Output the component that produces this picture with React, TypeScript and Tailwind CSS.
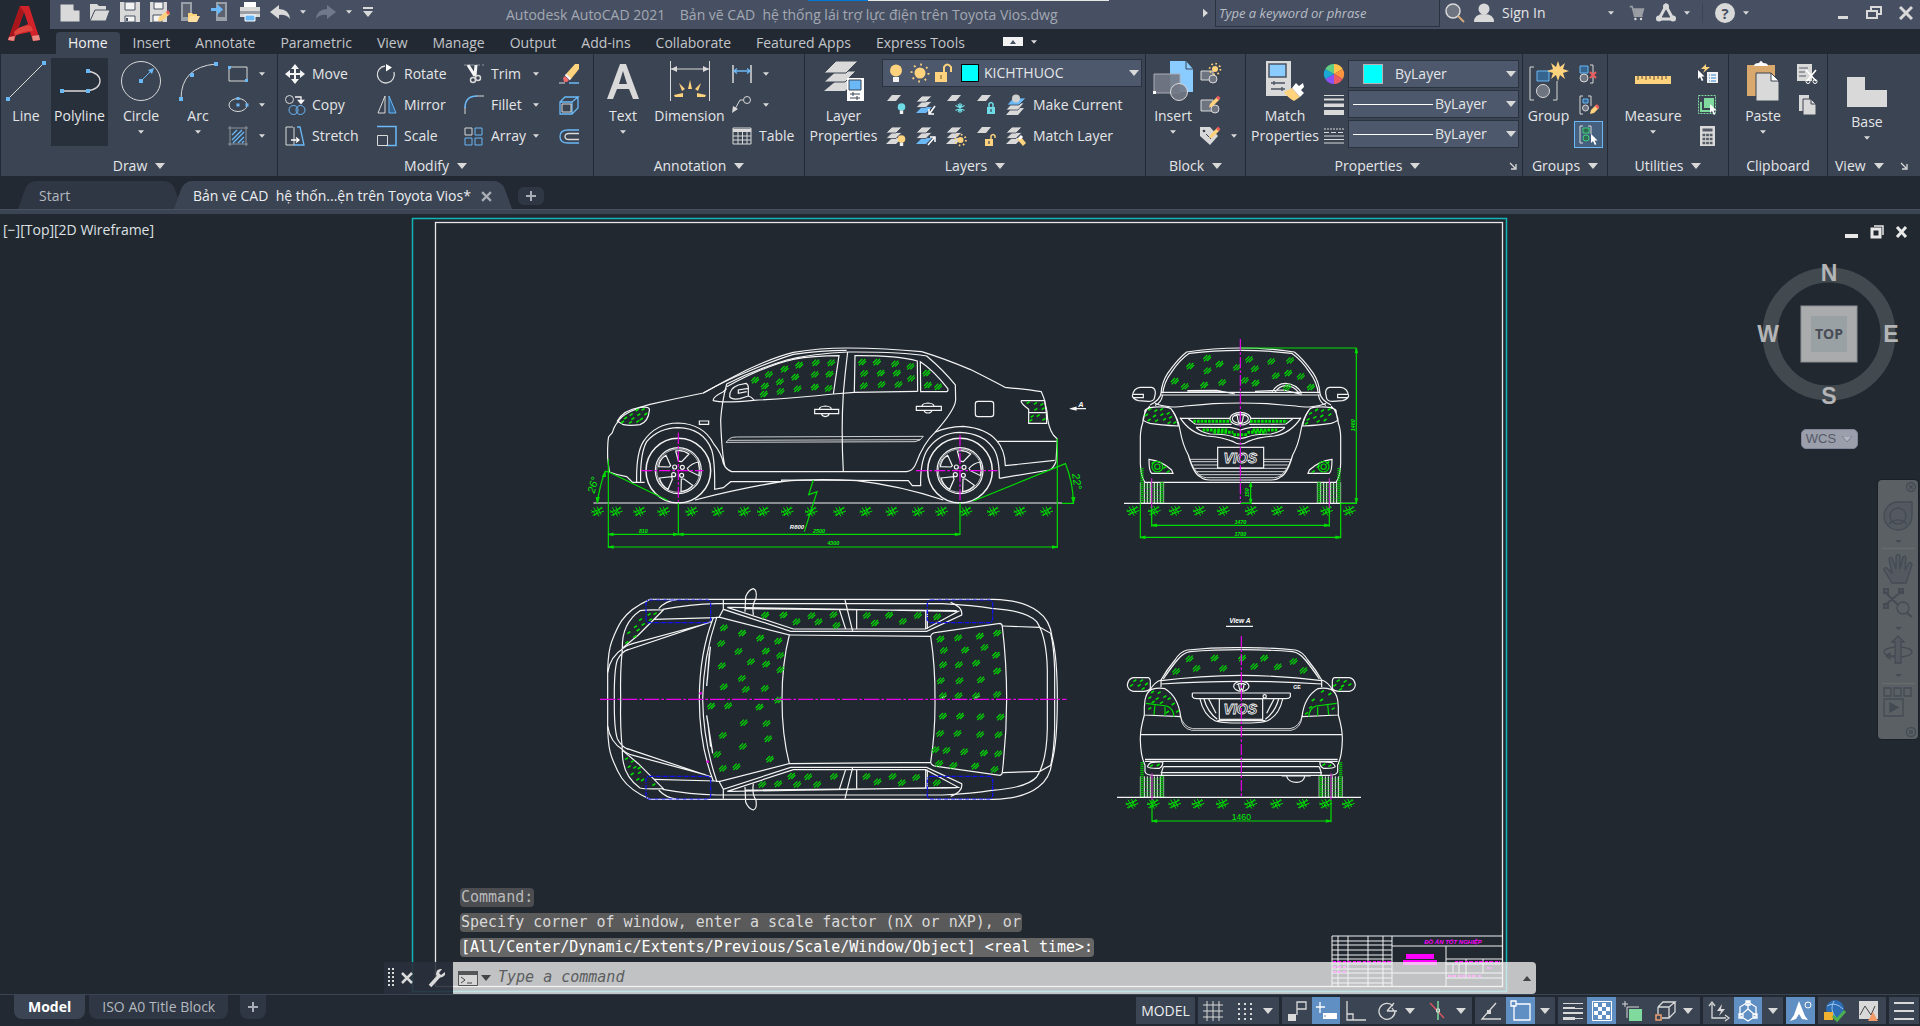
import { useState } from "react";
import type { ReactNode } from "react";

const W = "#d9d9d9";
const B = "#6bb8f7";
const Y = "#ffd27d";
const G = "#80d99d";
const C = "#6fdbe6";
const GREY = "#6e7480";

const sheet = (y: number, fill = W) => <path d={`M6 ${y}H15L10 ${y + 6}H1Z`} fill={fill} />;

const stack = (last = W) => (
  <>
    <path d="M6 12H16L10 18H0Z" fill={last} />
    <path d="M6 6.500H16L10 12.500H0Z" fill={W} stroke="#3b4453" strokeWidth=".8" />
    <path d="M6 1H16L10 7H0Z" fill={W} stroke="#3b4453" strokeWidth=".8" />
  </>
);

const bulb = (x: number, y: number, fill: string) => (
  <>
    <circle cx={x} cy={y} r="3.8" fill={fill} />
    <path d={`M${x - 1.7} ${y + 3.5}h3.4v3.5h-3.4z`} fill="#f2f2f2" />
  </>
);

const sun = (x: number, y: number, r: number) => (
  <>
    <circle cx={x} cy={y} r={r} fill={Y} />
    <circle cx={x} cy={y} r={r + 2.4} fill="none" stroke={Y} strokeWidth="1.8" strokeDasharray="1.6 2.6" />
  </>
);

const lock = (x: number, y: number, fill: string, open = false) => (
  <>
    <path d={`M${x} ${y}h8v7h-8z`} fill={fill} />
    <path d={open ? `M${x + 6} ${y}v-3q2-3 4 0v2` : `M${x + 2} ${y}v-3q2-3 4 0v3`} fill="none" stroke={fill} strokeWidth="1.5" />
    <path d={`M${x + 4} ${y + 2}v3`} stroke="#3b4453" strokeWidth="1.2" />
  </>
);

const cursor = (x: number, y: number) => (
  <path d={`M${x} ${y}l0 9l2 -2l1.8 4l1.6 -.8l-1.8 -3.6l3 0z`} fill="#fff" />
);

const pencil = (
  <>
    <path d="M10 9l7-7l2.5 2.5l-7 7l-3.5 1z" fill={Y} />
    <path d="M16 3l2-2.5l2.5 2.5l-2 2z" fill="#ef5b5b" />
  </>
);

const icons: Record<string, ReactNode> = {
  // quick access bar
  newFile: <path d="M0 2h14l6 6v12H0zM14 2v6h6" fill={W} stroke="#475063" />,
  open: <><path d="M0 19V2h7l2 2h7v4H5L0 19z" fill={W} /><path d="M5 8h15l-4 11H0z" fill={W} stroke="#475063" /></>,
  save: <><path d="M0 0h20v20H0z" fill={W} /><path d="M5 0h10v8H5zM5 14h10v6H5z" fill="#f3f3f3" stroke="#475063" /><path d="M7 16v3" stroke="#475063" strokeWidth="2" /></>,
  saveAs: <><path d="M0 0h17v20H0z" fill={W} /><path d="M4 0h9v7H4zM3 13h9v7H3z" fill="#f3f3f3" stroke="#475063" /><path d="M8 19l1-4l8-6l3 3l-8 7z" fill={Y} /><path d="M16 10l2-2l2 3l-2 2z" fill="#ef5b5b" /></>,
  openMobile: <><path d="M1 0h11v19H1z" fill="#9aa0a8" /><path d="M3 2h7v13H3z" fill="#5c6270" /><path d="M8 11h4l1 1h4v7H8z" fill={Y} /><path d="M10 14h10l-3 6H8z" fill="#ffe0a0" /></>,
  saveMobile: <><path d="M6 0h11v19H6z" fill="#9aa0a8" /><path d="M8 2h7v13H8z" fill="#5c6270" /><path d="M1 6h6V2l6 5.500l-6 5.500V9H1z" fill={B} /></>,
  print: <><path d="M4 0h12v5h4v10H0V5h4z" fill={W} /><path d="M4 0h12v5H4z" fill="#fff" /><path d="M0 9h20v3H0z" fill="#9a9da3" /><path d="M5 13h10v6H5z" fill={B} stroke="#fff" /></>,
  undo: <path d="M0 10L9 3v4q10 0 11 10q-4-5-11-4v4z" fill={W} />,
  redo: <path d="M20 10L11 3v4Q1 7 0 17q4-5 11-4v4z" fill="#70798a" />,
  customize: <><path d="M5 5h10v2H5z" fill={W} /><path d="M5 9h10l-5 6z" fill={W} /></>,
  search: <><circle cx="8" cy="8" r="7" fill="#6e7480" stroke={W} strokeWidth="1.500" /><path d="M13 13l6 6" stroke="#d6a878" strokeWidth="2" /></>,
  user: <><circle cx="10" cy="6" r="5.500" fill={W} /><path d="M0 19q0-8 10-8t10 8z" fill={W} /></>,
  cart: <><path d="M1 2h3l3 12h10M5 5h13l-2 7H7" fill="none" stroke="#9a9da3" strokeWidth="2" /><path d="M6 5h12l-2 7H7z" fill="#9a9da3" /><circle cx="8" cy="17.500" r="1.500" fill={W} /><circle cx="15" cy="17.500" r="1.500" fill={W} /></>,
  autodesk: <><path d="M10 3L3 16h14z" fill="none" stroke={W} strokeWidth="3" /><circle cx="10" cy="3.500" r="3" fill={W} /><circle cx="3" cy="15.500" r="3" fill={W} /><circle cx="17" cy="15.500" r="3" fill={W} /></>,
  // draw
  rectangle: <><path d="M1 3h18v14H1z" fill="none" stroke={W} /><path d="M0 2h3v3H0zM17 15h3v3h-3z" fill={B} /></>,
  ellipse: <><ellipse cx="10" cy="10" rx="9" ry="6.500" fill="none" stroke={W} /><path d="M8.500 2h3v3h-3zM8.500 8.500h3v3h-3zM17.500 8.500h3v3h-3z" fill={B} /></>,
  hatch: <><path d="M2 0v20M18 0v20M0 2h20M0 18h20" stroke="#8e939b" /><path d="M4 9l5-5M4 14L14 4M5 17L16 6M10 17l6-6M14 17l2-2" stroke={B} strokeWidth="1.300" /></>,
  // modify
  move: <path d="M10 0l4 5h-3v4h4V6l5 4l-5 4v-3h-4v4h3l-4 5l-4-5h3v-4H5v3l-5-4l5-4v3h4V5H6z" fill="#f5f5f5" />,
  copy: <><circle cx="4.500" cy="4.500" r="4" fill="none" stroke={W} /><circle cx="8.500" cy="15" r="4.500" fill="none" stroke={B} /><circle cx="15.500" cy="15" r="4.500" fill="none" stroke={B} /><path d="M10 2h6v5M13.500 5.500l2.500 3l2.500-3z" fill="none" stroke="#f5f5f5" strokeWidth="1.300" /></>,
  stretch: <><path d="M8 1H1v18h8V1" fill="none" stroke={W} /><path d="M12 1h3l4 18H9" fill="none" stroke={B} strokeWidth="1.300" /><path d="M6 14h7M11 11.500l3 2.500l-3 2.500" fill="none" stroke="#fff" strokeWidth="1.300" /></>,
  rotate: <><path d="M8 2a8.500 8.500 0 1 0 9 6" fill="none" stroke={W} strokeWidth="1.300" /><path d="M9 0l6 3.500l-6 4z" fill="#fff" /></>,
  mirror: <><path d="M8 1v17H1z" fill="none" stroke={W} /><path d="M12 1v17h7z" fill="#35648f" stroke={B} /></>,
  scale: <><path d="M0 .5h19v19H9" fill="none" stroke={B} strokeWidth="1.500" /><path d="M.5 9.500h10v10H.5z" fill="none" stroke={W} /></>,
  trim: <><path d="M0 1h20" stroke="#8e939b" strokeDasharray="4 2" /><path d="M4 1l7 11M12 1l-1 11" stroke="#f5f5f5" strokeWidth="3" /><circle cx="9" cy="16" r="2.500" fill="none" stroke={W} strokeWidth="1.500" /><circle cx="14" cy="14" r="2.500" fill="none" stroke={W} strokeWidth="1.500" /></>,
  fillet: <><path d="M1 19v-7M12 1h8" stroke={W} /><path d="M1 13Q1 1 13 1" fill="none" stroke={B} strokeWidth="1.500" /></>,
  array: <><path d="M1 2h7v7H1z" fill="none" stroke={W} /><path d="M11 2h7v7h-7zM1 12h7v7H1zM11 12h7v7h-7z" fill="none" stroke={B} /></>,
  erase: <><path d="M0 19h6" stroke={W} /><path d="M10 19h10" stroke={B} strokeWidth="1.500" /><path d="M7 10L16 0h4v5L12 15z" fill={Y} /><path d="M4 14l2-2l4 4l-2 2H5z" fill="#ef6b6b" /><path d="M6.500 10.500l5 5" stroke="#fff" strokeWidth="2" /></>,
  explode: <><path d="M1 7h12v12H1zM1 7l5-5h13l-6 5M19 2v11l-6 6" fill="none" stroke={B} strokeWidth="1.300" /><path d="M3 9h9v8H3z" fill="none" stroke={W} /></>,
  offset: <><path d="M20 4H9q-8 0-8 6.500T9 17h11" fill="none" stroke={B} strokeWidth="1.300" /><path d="M20 7.500H10q-4 0-4 3t4 3h10" fill="none" stroke={W} strokeWidth="1.300" /></>,
  // annotation
  linear: <><path d="M1 1v18M19 1v18" stroke={W} strokeWidth="1.500" /><path d="M2 7h16M5 4.500L2 7l3 2.500M15 4.500L18 7l-3 2.500" fill="none" stroke={B} strokeWidth="1.300" /></>,
  leader: <><circle cx="15" cy="5" r="3.500" fill="none" stroke={W} /><path d="M11 5H8L3 14" fill="none" stroke={W} /><path d="M0 18l1-7l5 3z" fill={W} /></>,
  table: <><path d="M1 2h18v16H1z" fill="none" stroke={W} /><path d="M1 3h18v3H1z" fill={W} /><path d="M1 10h18M1 14h18M6 5v13M10.500 5v13M15 5v13" stroke={W} /></>,
  // layers
  layerOff: <>{sheet(0)}{bulb(15.500, 12, C)}</>,
  layerIso: <>{stack(B)}<path d="M19 11l-5 7M13 14v5h5" fill="none" stroke="#fff" strokeWidth="1.500" /></>,
  layerFreeze: <>{sheet(0)}<path d="M14 8v10M9.500 10.500l9 5M9.500 15.500l9-5M12 9l4 8M16 9l-4 8" stroke={C} strokeWidth="1.200" /></>,
  layerLock: <>{sheet(0)}{lock(11, 12, C)}</>,
  makeCurrent: <><path d="M6 13H18L12 20H0Z" fill={W} /><path d="M6 8H18L12 15H0Z" fill={W} stroke="#3b4453" strokeWidth=".8" /><path d="M7 3h13l-7 7H1z" fill={B} stroke="#3b4453" strokeWidth=".8" /><circle cx="10" cy="3.500" r="4" fill="#cfcfcf" /></>,
  layerOn: <>{stack()}{bulb(15.500, 13, Y)}</>,
  layerUniso: <>{stack(B)}<path d="M12 19l6-7M14 11h5v5" fill="none" stroke="#fff" strokeWidth="1.500" /></>,
  layerThaw: <>{stack()}{sun(14.500, 14, 3)}</>,
  layerUnlock: <>{sheet(1)}{lock(9, 13, Y, true)}</>,
  matchLayer: <>{stack()}<path d="M11 13l4-2l5 6l-3 3z" fill={Y} /><path d="M13 13l3-3" stroke="#fff" strokeWidth="3" /></>,
  bulb: <><circle cx="10" cy="7.500" r="6" fill={Y} /><path d="M7 14h6v5H7z" fill="#f2f2f2" /></>,
  sun: <><circle cx="10" cy="10" r="5.500" fill={Y} /><circle cx="10" cy="10" r="8.500" fill="none" stroke={Y} strokeWidth="2" strokeDasharray="1.700 4.970" /></>,
  unlock: <><path d="M1 9h12v10H1z" fill={Y} /><path d="M10 9V4q3-5 7 0v5" fill="none" stroke={Y} strokeWidth="2" /><path d="M7 12v4" stroke="#6b5a3a" /></>,
  // block
  createBlock: <><path d="M1 7h12v9H1z" fill={GREY} stroke={W} /><circle cx="13" cy="15" r="4" fill={GREY} stroke={W} />{sun(15, 5, 3)}</>,
  editBlock: <><path d="M1 5h12v11H1z" fill={GREY} stroke={W} /><circle cx="15" cy="14" r="4" fill={GREY} stroke={W} />{pencil}</>,
  editAttr: <><path d="M0 1h10l8 9l-8 9l-10-9z" fill={W} /><circle cx="4" cy="5" r="1.300" fill="#3b4453" /><path d="M6 8l5 5" stroke="#3b4453" />{pencil}</>,
  // properties
  colorWheel: <><path d="M10 10V0A10 10 0 0 1 18.700 5z" fill="#ffc24a" /><path d="M10 10L18.700 5a10 10 0 0 1 0 10z" fill="#ff9440" /><path d="M10 10l8.700 5A10 10 0 0 1 10 20z" fill="#ec5a63" /><path d="M10 10v10A10 10 0 0 1 1.300 15z" fill="#8a52f2" /><path d="M10 10L1.300 15a10 10 0 0 1 0-10z" fill="#1aa9d6" /><path d="M10 10L1.300 5A10 10 0 0 1 10 0z" fill="#5fcf86" /></>,
  lineweight: <path d="M0 0h20v1H0zM0 3.500h20v2H0zM0 8.500h20v3.500H0zM0 15h20v5H0z" fill={W} />,
  linetype: <><path d="M0 3h20" stroke={W} strokeDasharray="2 1" /><path d="M0 6.500h20" stroke={W} strokeDasharray="5 2" /><path d="M0 10h20M0 13.500h20M0 17h20" stroke={W} /></>,
  // groups
  ungroup: <><path d="M1 2h8v7H1z" fill="#35648f" stroke={B} /><circle cx="5" cy="14" r="4" fill={GREY} stroke={W} /><path d="M11 1h3v18h-3" fill="none" stroke={W} /><path d="M11 8l6 6M17 8l-6 6" stroke="#ef5b5b" strokeWidth="2" /></>,
  groupEdit: <><path d="M4 1H1v18h3M9 1h3v10" fill="none" stroke={W} /><path d="M4 4h5v4H4z" fill="#35648f" stroke={B} /><circle cx="6.500" cy="13" r="3" fill={GREY} stroke={W} /><path d="M11 19l1-4l5-5l3 3l-5 5z" fill={Y} /><path d="M16 11l2-2l2.500 3l-2 2z" fill="#ef5b5b" /></>,
  groupSel: <><path d="M4 1H1v17h3M9 1h3v8" fill="none" stroke={W} /><path d="M4 3h6v5H4z" fill="#2f6b55" stroke="#3ed07a" /><circle cx="7" cy="13" r="3" fill="#2f6b55" stroke="#3ed07a" />{cursor(12, 9)}</>,
  // utilities
  quickSelect: <>{cursor(0, 6)}<path d="M9 8h11v11H9z" fill="#f2f2f2" /><path d="M11 11h1M11 14h1M11 17h1M13 11h5M13 14h5M13 17h5" stroke="#2f86d0" /><path d="M8 0l-5 5h4l-2 4l7-6H8z" fill={Y} /></>,
  selectAll: <><path d="M.5 .5h17v18H.5z" fill="none" stroke={G} strokeDasharray="2 1" /><path d="M6 3h10v10H6z" fill={G} /><path d="M3 7v9h9" fill="none" stroke={G} strokeWidth="2" />{cursor(12, 9)}</>,
  calculator: <><path d="M2 0h15v20H2z" fill={W} /><path d="M4.500 2.500h10v3h-10z" fill="#555b66" /><path d="M4.500 9h10M4.500 13h10M4.500 17h10" stroke="#555b66" strokeWidth="2.500" strokeDasharray="2.800 .8" /></>,
  cut: <><path d="M0 0h15v17H0z" fill={W} /><path d="M2 4h9M2 8h6M2 12h7" stroke="#555b66" /><path d="M9 6l10 11M19 6L10 17" stroke="#fff" strokeWidth="1.600" /><circle cx="11" cy="17.500" r="2" fill="none" stroke="#fff" /><circle cx="18" cy="17.500" r="2" fill="none" stroke="#fff" /></>,
  copyClip: <><path d="M2 0h10v16H2z" fill={W} /><path d="M6 4h8l5 5v11H6z" fill={W} stroke="#3b4453" /><path d="M14 4v5h5" fill="none" stroke="#3b4453" /></>,
};

function Icon({ name, size = "size-5" }: { name: string; size?: string }) {
  return (
    <svg viewBox="0 0 20 20" className={`${size} shrink-0 overflow-visible`} aria-hidden="true">
      {icons[name]}
    </svg>
  );
}

function Caret({ big = false }: { big?: boolean }) {
  return (
    <svg viewBox="0 0 10 6" className={big ? "w-[10px] h-[6px] shrink-0" : "w-[6px] h-[4px] shrink-0"} aria-hidden="true">
      <path d="M0 0h10l-5 6z" fill={W} />
    </svg>
  );
}

const bigIcons: Record<string, ReactNode> = {
  line: <><path d="M2 38L38 2" stroke={W} /><path d="M0 36h4v4H0zM36 0h4v4h-4z" fill={B} /></>,
  polyline: <><path d="M1 30h26q13-2 13-10t-13-10" fill="none" stroke={W} strokeWidth="1.300" /><path d="M0 28h4v4H0zM26 28h4v4h-4zM26 8h4v4h-4z" fill={B} /></>,
  circle: <><circle cx="20" cy="20" r="19.500" fill="none" stroke={W} /><path d="M20 20L31 9" stroke={B} /><path d="M18 18h4v4h-4zM33 7l-6 2l4 4z" fill={B} /></>,
  arc: <><path d="M3 38Q3 6 38 3" fill="none" stroke={W} /><path d="M1 36h4v4H1zM12 12h4v4h-4zM36 1h4v4h-4z" fill={B} /></>,
  text: <path d="M4 38L17 3h6l13 35h-6l-4-10H14l-4 10zM16 23h8l-4-13z" fill={W} fillRule="evenodd" />,
  dimension: <><path d="M.5 0v40M39.500 0v40M1 8h38" stroke={W} /><path d="M1 8l6-3v6zM39 8l-6-3v6z" fill={W} /><path d="M20 19l2 9h-4zM9 22l6 6l-3 2zM31 22l-6 6l3 2zM4 34l9-2v4H5zM36 34l-9-2v4h8z" fill={Y} /></>,
  layers: <><path d="M12 20h20l-11 10H0z" fill={W} /><path d="M12 10h20l-11 11H0z" fill={W} stroke="#3b4453" /><path d="M12 0h22L22 12H0z" fill={W} stroke="#3b4453" /><path d="M23 17h17v23H23z" fill="#fff" /><path d="M25 19h12v10H25z" fill={B} stroke="#3b4453" /><path d="M26 33h10M26 37h10M29 31v4M33 35v4" stroke="#3b4453" /></>,
  insert: <><path d="M17 0h16l7 8v23H17z" fill="#8accff" /><path d="M33 0v8h7" fill="none" stroke="#3b4453" /><path d="M1 13h26v19H1z" fill="#737986" fillOpacity=".9" stroke="#a9adb5" /><circle cx="26" cy="31" r="8.500" fill="#737986" fillOpacity=".9" stroke={W} /><path d="M0 30h3v3H0z" fill="#fff" /></>,
  match: <><path d="M1 0h25v35H1z" fill={W} /><path d="M4 3h17v13H4z" fill="#8accff" stroke="#4a5362" strokeWidth="1.500" /><path d="M6 22h14M6 28h14M9 20v4M17 26v4" stroke="#4a5362" strokeWidth="1.300" /><path d="M19 31l8-4l8 9l-6 4q-6-3-10-9z" fill={Y} /><path d="M27 27l4-5l3 3l4-3l1 4l-3 3l3 3l-4 4z" fill="#fff" /></>,
  group: <><path d="M5 6H1v33h4M24 39h4V20" fill="none" stroke={W} /><path d="M8 10h12v10H8z" fill="#35648f" stroke={B} /><circle cx="14" cy="30" r="6.500" fill={GREY} stroke={W} /><path d="M29 0l2 6l5-4l-2 6l6 2l-6 2l2 6l-5-4l-2 6l-2-6l-5 4l2-6l-6-2l6-2l-2-6l5 4z" fill={Y} /></>,
  measure: <><path d="M2 15h36v8H2z" fill={Y} /><path d="M5 15v4M9 15v3M13 15v4M17 15v3M21 15v4M25 15v3M29 15v4M33 15v3" stroke="#5a4d33" /></>,
  paste: <><path d="M4 4h28v31H4z" fill="#d9a86c" /><path d="M11 5q0-3 5-3q2-4 4 0q5 0 5 3z" fill="#fff" /><path d="M13 12h15l8 9v19H13z" fill={W} stroke="#3b4453" /><path d="M28 12v8h8z" fill="#fff" stroke="#3b4453" /></>,
  base: <path d="M0 10h18v13h22v17H0z" fill={W} />,
};

interface BigButtonProps {
  icon: string;
  label: ReactNode;
  width: string;
  caret?: boolean;
  active?: boolean;
}

function BigButton({ icon, label, width, caret, active }: BigButtonProps) {
  return (
    <button className={`flex h-[88px] ${width} shrink-0 flex-col items-center pt-[3px] ${active ? "bg-[#28303c]" : ""}`}>
      <svg viewBox="0 0 40 40" className="size-10 shrink-0 overflow-visible" aria-hidden="true">
        {bigIcons[icon]}
      </svg>
      <span className="mt-[5px] text-center leading-5 whitespace-nowrap">{label}</span>
      {caret && <span className="mt-1"><Caret /></span>}
    </button>
  );
}

interface Tool {
  icon: string;
  label?: string;
  caret?: boolean;
}

// one column of three 31px rows
function ToolColumn({ tools, width }: { tools: Tool[]; width: string }) {
  return (
    <div className={`flex ${width} shrink-0 flex-col`}>
      {tools.map(tool => (
        <button key={tool.icon} className="flex h-[31px] items-center" aria-label={tool.label || tool.icon}>
          <Icon name={tool.icon} />
          {tool.label && <span className="ml-[7px] whitespace-nowrap">{tool.label}</span>}
          {tool.caret && <span className={tool.label ? "ml-auto mr-5" : "ml-[11px]"}><Caret /></span>}
        </button>
      ))}
    </div>
  );
}

interface PanelProps {
  title: string;
  width: string;
  caret?: boolean;
  launcher?: boolean;
  children: ReactNode;
}

function Panel({ title, width, caret = true, launcher, children }: PanelProps) {
  return (
    <section className={`flex ${width} h-[122px] flex-col bg-[#3b4453]`}>
      <div className="flex h-[102px] pt-1">{children}</div>
      <div className="flex items-center">
        <button className="flex flex-1 items-center justify-center gap-2 leading-5">
          {title}
          {caret && <Caret big />}
        </button>
        {launcher && (
          <button className="mr-[5px]" aria-label={`${title} settings`}>
            <svg viewBox="0 0 8 8" className="size-2"><path d="M1 1l5 5M7 2v5H2" fill="none" stroke={W} strokeWidth="1.300" /></svg>
          </button>
        )}
      </div>
    </section>
  );
}

function PropertySelect({ label, line }: { label: string; line?: boolean }) {
  return (
    <label className="flex h-7 w-[171px] items-center border border-[#2a3240] bg-[#4d586c] pr-[2px]">
      {line ? <span className="ml-1 h-px w-20 bg-white" /> : <span className="mr-[10px] ml-[14px] size-5 border border-[#b5b5b5] bg-[#00ffff]" />}
      <select aria-label={label} className="min-w-0 flex-1 appearance-none bg-transparent pl-[2px]">
        <option>ByLayer</option>
      </select>
      <Caret big />
    </label>
  );
}

const menuTabs = ["Home", "Insert", "Annotate", "Parametric", "View", "Manage", "Output", "Add-ins", "Collaborate", "Featured Apps", "Express Tools"];

function Header() {
  const [tab, setTab] = useState("Home");

  return (
    <header className="flex bg-[#222933]">
      <button className="h-[54px] w-[50px] shrink-0" aria-label="Application menu">
        <svg viewBox="0 0 50 54" className="h-[54px] w-[50px]">
          <path d="M20 6h9l11 34l-7 1l-3-9l-14 3l-2 6l-6-1z" fill="#d2232a" />
          <path d="M24 12l-6 17l10-5z" fill="#222933" />
          <path d="M20 6l4 6l-9 24l-1 5l-6-1z" fill="#a8161c" />
          <path d="M14 32q8-8 17-6l2 5q-11 0-18 5z" fill="#e0443f" />
          <path d="M9 37l6-1l-1 5l-6-1zM32 36l7-1l1 5l-7 1z" fill="#e98a84" />
        </svg>
      </button>
      <div className="flex-1">
        <div className="flex h-[29px] items-center bg-[#475063]">
          <div className="flex items-center gap-[10px] pb-[6px] pl-[10px]">
            {["newFile", "open", "save", "saveAs", "openMobile", "saveMobile", "print", "undo"].map(name => (
              <button key={name} aria-label={name}><Icon name={name} /></button>
            ))}
            <Caret />
            <button aria-label="redo"><Icon name="redo" /></button>
            <Caret />
            <button aria-label="customize" className="-ml-1"><Icon name="customize" /></button>
          </div>
          <div className="flex flex-1 flex-col self-start pl-[128px]">
            <div className="ml-[302px] flex h-px">
              <span className="w-[60px] bg-[#0078d7]" />
              <span className="w-[241px] bg-[#e6e6e6]" />
            </div>
            <h1 className="leading-[27px] whitespace-pre text-[#a3a8b2]">
              {"Autodesk AutoCAD 2021    Bản vẽ CAD  hệ thống lái trợ lực điện trên Toyota Vios.dwg"}
            </h1>
          </div>
          <svg viewBox="0 0 6 10" className="mr-[7px] mb-1 h-[10px] w-[5px]"><path d="M0 0l6 5l-6 5z" fill={W} /></svg>
          <input
            aria-label="Search help"
            placeholder="Type a keyword or phrase"
            className="h-[27px] w-[225px] self-start border border-t-0 border-[#2b3340] px-[3px] text-[13px] italic placeholder:text-[#b9bdc5]"
          />
          <div className="flex w-[480px] items-center pb-[3px] pl-[5px]">
            <Icon name="search" />
            <button className="ml-[9px] flex w-[140px] items-center gap-2">
              <Icon name="user" />
              Sign In
              <span className="ml-auto"><Caret /></span>
            </button>
            <button className="ml-[15px]" aria-label="App Store"><Icon name="cart" size="size-4" /></button>
            <button className="ml-[11px] flex items-center gap-2" aria-label="Autodesk apps"><Icon name="autodesk" /><Caret /></button>
            <span className="mr-3 ml-3 h-5 w-px bg-[#3b4453]" />
            <button className="flex items-center gap-2" aria-label="Help">
              <span className="size-5 rounded-full bg-[#d9d9d9] text-center text-[15px] leading-5 font-bold text-[#475063]">?</span>
              <Caret />
            </button>
            <span className="ml-auto flex items-center gap-[17px] pr-[7px]">
              <button aria-label="Minimize"><svg viewBox="0 0 12 16" className="h-4 w-3"><path d="M1 11h10v3H1z" fill={W} /></svg></button>
              <button aria-label="Restore"><svg viewBox="0 0 16 16" className="size-4"><path d="M1 6h10v7H1zM5 6V2h10v7h-4" fill="none" stroke={W} strokeWidth="2" /></svg></button>
              <button aria-label="Close"><svg viewBox="0 0 14 14" className="size-[14px]"><path d="M1 1l12 12M13 1L1 13" stroke={W} strokeWidth="3" /></svg></button>
            </span>
          </div>
        </div>
        <nav className="flex h-[25px] items-end gap-px pl-[6px]">
          {menuTabs.map(name => (
            <button
              key={name}
              onClick={() => setTab(name)}
              className={`h-[22px] px-3 leading-[22px] ${tab === name ? "rounded-t-sm bg-[#3b4453] text-[#f0f0f0]" : "text-[#c2c5c9]"}`}
            >
              {name}
            </button>
          ))}
          <button className="ml-[25px] flex items-center gap-2 pb-2" aria-label="Minimize ribbon">
            <span className="flex h-[9px] w-5 items-center justify-center bg-[#f2f2f2]">
              <svg viewBox="0 0 6 4" className="h-1 w-[6px]"><path d="M0 4h6L3 0z" fill="#475063" /></svg>
            </span>
            <Caret />
          </button>
        </nav>
      </div>
    </header>
  );
}

function Ribbon() {
  return (
    <div className="flex gap-px bg-[#232a35] pl-px text-[#e4e6e8]">
      <Panel title="Draw" width="w-[276px]">
        <BigButton icon="line" label="Line" width="w-[50px]" />
        <BigButton icon="polyline" label="Polyline" width="w-[57px]" active />
        <BigButton icon="circle" label="Circle" width="w-[66px]" caret />
        <BigButton icon="arc" label="Arc" width="w-12" caret />
        <span className="w-[6px]" />
        <ToolColumn width="w-10" tools={[{ icon: "rectangle", caret: true }, { icon: "ellipse", caret: true }, { icon: "hatch", caret: true }]} />
      </Panel>

      <Panel title="Modify" width="w-[315px]">
        <span className="w-[7px]" />
        <ToolColumn width="w-[92px]" tools={[{ icon: "move", label: "Move" }, { icon: "copy", label: "Copy" }, { icon: "stretch", label: "Stretch" }]} />
        <ToolColumn width="w-[87px]" tools={[{ icon: "rotate", label: "Rotate" }, { icon: "mirror", label: "Mirror" }, { icon: "scale", label: "Scale" }]} />
        <ToolColumn width="w-[95px]" tools={[{ icon: "trim", label: "Trim", caret: true }, { icon: "fillet", label: "Fillet", caret: true }, { icon: "array", label: "Array", caret: true }]} />
        <ToolColumn width="w-5" tools={[{ icon: "erase" }, { icon: "explode" }, { icon: "offset" }]} />
      </Panel>

      <Panel title="Annotation" width="w-[210px]">
        <BigButton icon="text" label="Text" width="w-[58px]" caret />
        <BigButton icon="dimension" label="Dimension" width="w-[75px]" />
        <span className="w-[5px]" />
        <ToolColumn width="w-[70px]" tools={[{ icon: "linear", caret: true }, { icon: "leader", caret: true }, { icon: "table", label: "Table" }]} />
      </Panel>

      <Panel title="Layers" width="w-[340px]">
        <BigButton icon="layers" label={<>Layer<br />Properties</>} width="w-[77px]" />
        <div className="flex flex-1 flex-col">
          <label className="mt-px mr-[3px] mb-[2px] flex h-7 items-center gap-1 border border-[#2a3240] bg-[#4d586c] pr-[2px] pl-[3px]">
            <Icon name="bulb" />
            <Icon name="sun" />
            <Icon name="unlock" />
            <span className="ml-[3px] h-[18px] w-[18px] border border-black bg-[#00ffff]" />
            <select aria-label="Layer" className="flex-1 appearance-none bg-transparent pl-[1px]">
              <option>KICHTHUOC</option>
            </select>
            <Caret big />
          </label>
          <div className="flex h-[31px] items-center gap-[10px] pl-1">
            {["layerOff", "layerIso", "layerFreeze", "layerLock"].map(name => (
              <button key={name} aria-label={name}><Icon name={name} /></button>
            ))}
            <button className="flex items-center gap-[7px]"><Icon name="makeCurrent" />Make Current</button>
          </div>
          <div className="flex h-[31px] items-center gap-[10px] pl-1">
            {["layerOn", "layerUniso", "layerThaw", "layerUnlock"].map(name => (
              <button key={name} aria-label={name}><Icon name={name} /></button>
            ))}
            <button className="flex items-center gap-[7px]"><Icon name="matchLayer" />Match Layer</button>
          </div>
        </div>
      </Panel>

      <Panel title="Block" width="w-[99px]">
        <BigButton icon="insert" label="Insert" width="w-[54px]" caret />
        <ToolColumn width="w-10" tools={[{ icon: "createBlock" }, { icon: "editBlock" }, { icon: "editAttr", caret: true }]} />
      </Panel>

      <Panel title="Properties" width="w-[276px]" launcher>
        <BigButton icon="match" label={<>Match<br />Properties</>} width="w-[78px]" />
        <ToolColumn width="w-6" tools={[{ icon: "colorWheel" }, { icon: "lineweight" }, { icon: "linetype" }]} />
        <div className="flex flex-col gap-[2px] pt-[2px]">
          <PropertySelect label="Object color" />
          <PropertySelect label="Lineweight" line />
          <PropertySelect label="Linetype" line />
        </div>
      </Panel>

      <Panel title="Groups" width="w-[84px]">
        <BigButton icon="group" label="Group" width="w-[51px]" />
        <div className="flex flex-col">
          <button className="flex h-[31px] w-[29px] items-center justify-center" aria-label="Ungroup"><Icon name="ungroup" /></button>
          <button className="flex h-[31px] w-[29px] items-center justify-center" aria-label="Group edit"><Icon name="groupEdit" /></button>
          <button className="mt-px flex h-[27px] w-[29px] items-center justify-center border border-[#6bb8f7] bg-[#46607f]" aria-label="Group selection"><Icon name="groupSel" /></button>
        </div>
      </Panel>

      <Panel title="Utilities" width="w-[120px]">
        <BigButton icon="measure" label="Measure" width="w-[90px]" caret />
        <ToolColumn width="w-5" tools={[{ icon: "quickSelect" }, { icon: "selectAll" }, { icon: "calculator" }]} />
      </Panel>

      <Panel title="Clipboard" width="w-[98px]" caret={false}>
        <BigButton icon="paste" label="Paste" width="w-[68px]" caret />
        <ToolColumn width="w-5" tools={[{ icon: "cut" }, { icon: "copyClip" }]} />
      </Panel>

      <section className="flex h-[122px] flex-1 flex-col bg-[#3b4453]">
        <div className="flex h-[102px] pt-[10px]">
          <BigButton icon="base" label="Base" width="w-[78px]" caret />
        </div>
        <div className="flex items-center gap-4 pl-[7px]">
          <button className="flex items-center gap-2 leading-5">View<Caret big /></button>
          <button aria-label="View settings">
            <svg viewBox="0 0 8 8" className="size-2"><path d="M1 1l5 5M7 2v5H2" fill="none" stroke={W} strokeWidth="1.300" /></svg>
          </button>
        </div>
      </section>
    </div>
  );
}

function DocTab({ color, children }: { color: string; children: ReactNode }) {
  return (
    <div className="relative flex h-7 items-center">
      <span className={`absolute inset-y-0 left-[-8px] w-1/2 -skew-x-[20deg] rounded-tl-lg ${color}`} />
      <span className={`absolute inset-y-0 right-[-8px] w-1/2 skew-x-[20deg] rounded-tr-lg ${color}`} />
      <span className={`absolute inset-y-0 inset-x-4 ${color}`} />
      <div className="relative flex w-full items-center pt-[2px]">{children}</div>
    </div>
  );
}

function DocumentTabs() {
  return (
    <div className="bg-[#222933]">
      <div className="flex h-[33px] items-end pl-[31px]">
        <DocTab color="bg-[#2f3745]">
          <button className="w-[138px] pl-2 text-left text-[#b4b8bf]">Start</button>
        </DocTab>
        <span className="w-[18px]" />
        <DocTab color="bg-[#3b4453]">
          <button className="pl-[6px] whitespace-pre text-[#eceef0]">{"Bản vẽ CAD  hệ thốn...ện trên Toyota Vios*"}</button>
          <button className="mr-2 ml-[10px]" aria-label="Close tab">
            <svg viewBox="0 0 10 10" className="size-[11px]"><path d="M1 1l8 8M9 1l-8 8" stroke="#a9adb5" strokeWidth="2" /></svg>
          </button>
        </DocTab>
        <button className="mb-1 ml-[18px] flex h-[18px] w-[26px] items-center justify-center rounded-md bg-[#2f3745]" aria-label="New tab">
          <svg viewBox="0 0 10 10" className="size-[10px]"><path d="M5 0v10M0 5h10" stroke="#a9adb5" strokeWidth="2" /></svg>
        </button>
      </div>
      <div className="mb-px h-[5px] border-t border-[#48515f] bg-[#3b4453]" />
    </div>
  );
}

type Pt = [number, number];

// short slanted strokes that stand for glass
const glass = (pts: Pt[]) =>
  pts.map(([x, y]) => `M${x - 11} ${y + 3}l12-12M${x - 9} ${y + 10}l19-19M${x} ${y + 9}l12-12`).join("");

const lampDots = (pts: Pt[]) => pts.map(([x, y]) => `M${x - 5} ${y + 3}l9-6`).join("");

const ground = (y: number, xs: number[]) =>
  xs.map(x => `M${x - 19} ${y + 3}l34-13M${x - 15} ${y + 12}l34-13M${x - 12} ${y - 12}l16 27M${x - 2} ${y - 14}l12 24M${x - 10} ${y + 14}l22-28M${x - 19} ${y - 3}l12 10`).join("");

// horizontal dimension line with its arrow heads
const dim = (x1: number, x2: number, y: number) =>
  `M${x1} ${y}H${x2}M${x1 + 14} ${y - 3}L${x1} ${y}l14 3zM${x2 - 14} ${y - 3}L${x2} ${y}l-14 3z`;

const dimText = { fill: "#00f000", stroke: "none", fontSize: 16, fontStyle: "italic", fontWeight: "bold", textAnchor: "middle" as const };
const CENTER = "34 6 8 6";

function Wheel({ cx }: { cx: number }) {
  return (
    <g transform={`translate(${cx - 295} 0)`}>
      <circle cx="295" cy="452" r="97" strokeWidth="4.500" />
      <circle cx="295" cy="452" r="69" />
      <circle cx="295" cy="452" r="65" strokeWidth="2" />
      <path d="M287 393Q308 388 327 402L305 425Q297 425 295 422ZM236 440Q238 418 258 406L272 437L268 441ZM322 445Q335 430 355 426Q360 445 357 467L326 452ZM238 474L275 470L277 478L264 508Q245 498 238 474ZM303 515L304 477L312 477L338 496Q325 512 303 515Z" />
      <path d="M278 441a6 6 0 1 0 12 0a6 6 0 1 0 -12 0M301 442a6 6 0 1 0 12 0a6 6 0 1 0 -12 0M275 464a6 6 0 1 0 12 0a6 6 0 1 0 -12 0M299 466a6 6 0 1 0 12 0a6 6 0 1 0 -12 0" />
    </g>
  );
}

function SideView() {
  return (
    <g transform="translate(580 320) scale(.33333)">
      <g stroke="#f4f4f4">
        <path d="M88 456L83 415Q82 370 86 350L97 338Q103 318 112 308Q120 290 150 275Q180 260 210 253Q290 235 370 219Q430 185 500 150Q580 112 640 97Q720 84 800 84Q920 85 1025 95Q1090 115 1170 148Q1230 178 1275 202Q1340 208 1384 215L1392 235L1401 275Q1403 320 1420 345L1432 357L1428 425Q1420 445 1408 450L1258 475" />
        <path d="M88 456Q110 465 140 470L158 487L194 487" />
        <path d="M370 219Q440 180 500 156Q590 118 640 103Q720 91 800 91" />
        <path d="M170 487Q168 400 190 365Q225 310 295 309Q370 312 400 370Q425 400 430 430Q438 450 455 455L980 455Q1000 452 1008 430Q1030 370 1065 337Q1125 270 1127 240L1126 195Q1090 150 1040 108Q960 95 805 96Q700 100 620 120Q520 150 440 192Q425 250 422 300Q425 400 435 440Q440 448 455 455" />
        <path d="M182 485Q180 400 200 365Q235 324 295 323Q370 325 395 390Q405 420 404 508L430 503L452 485L605 485L605 480L985 482L997 497L1022 497Q1020 420 1045 385Q1080 338 1140 337Q1210 340 1240 385Q1258 410 1258 475" />
        <path d="M1065 337Q1100 320 1150 319Q1220 325 1250 362Q1275 390 1276 437L1424 421M1250 364H1430" />
        <path d="M803 96Q795 160 790 220Q783 330 790 455" />
        <path d="M440 200Q560 135 640 118Q700 107 777 107L760 222Q650 234 520 241Q430 250 400 242Q396 232 430 215L440 206M760 222L823 217L1012 214" />
        <path d="M449 230Q448 205 475 195L498 190Q506 195 505 205V228Q515 230 522 240M449 230Q455 240 480 236L505 228M505 205L475 210V220L500 215" />
        <path d="M823 217L825 107Q950 106 1012 123L1013 215M1021 125Q1060 150 1103 205Q1106 213 1100 215H1022Z" />
        <path d="M438 367L450 355Q455 351 470 351L1030 349L1020 360L1005 365ZM445 361L1020 359" strokeWidth="2.500" />
        <path d="M704 268h72v13h-72zM1009 259h75v12h-75zM718 268q0-9 18-10q18 1 18 10M724 281q2 8 12 9q10-1 12-9M1026 259q0-9 18-10q18 1 18 10M1032 271q2 8 12 8q10 0 12-8M358 303h28v10h-28z" />
        <rect x="1186" y="244" width="55" height="46" rx="8" />
        <path d="M112 303Q130 270 180 262Q212 258 208 272Q205 305 180 314Q150 318 130 314ZM1323 242H1394L1399 278L1400 310H1346V268Q1323 250 1323 242M1346 278H1399" />
        <path d="M345 540Q480 505 605 485Q700 475 830 482Q960 497 1090 540M40 549H1446M1474 266H1518" />
        <path d="M1474 266l14-4v8z" fill="#fff" />
        <Wheel cx={295} />
        <Wheel cx={1140} />
      </g>
      <g stroke="#00dc00">
        <path d={glass([[525, 180], [566, 163], [613, 147], [657, 135], [707, 128], [753, 128], [554, 198], [599, 185], [645, 171], [704, 163], [748, 162], [551, 222], [601, 214], [652, 206], [704, 201], [745, 205], [846, 126], [890, 126], [945, 131], [991, 139], [852, 160], [902, 159], [950, 159], [993, 175], [851, 197], [904, 193], [955, 193], [1039, 159], [1043, 195], [1074, 200]])} />
        <path strokeWidth="5" d={lampDots([[172, 270], [190, 268], [154, 284], [177, 284], [198, 282], [137, 294], [159, 296], [185, 297], [128, 306], [152, 307], [174, 304], [1345, 248], [1367, 250], [1386, 253], [1368, 268], [1390, 266], [1357, 289], [1375, 287], [1353, 301], [1392, 298]])} />
        <path strokeWidth="3" d={ground(574, [53, 109, 179, 251, 335, 414, 493, 550, 622, 694, 779, 858, 936, 1015, 1085, 1158, 1240, 1320, 1400])} />
        <path d={`M85 418V684M295 549V645M1140 549V645M1432 355V684${dim(85, 295, 643)}${dim(295, 1140, 643)}${dim(85, 1432, 681)}`} />
        <path d="M85 455L262 541M75 455H85M75 455Q58 500 52 549M1180 543L1458 430M1456 430Q1480 490 1480 550M1446 550H1482M700 480L686 524L711 515L673 635M75 455l-7 14h8zM52 549l-3-16h8zM1480 549l-4-16h8z" />
      </g>
      <g {...dimText}>
        <text x="190" y="638">810</text>
        <text x="717" y="638">2500</text>
        <text x="760" y="676">4300</text>
        <text x="50" y="498" fontSize="32" fontWeight="normal" transform="rotate(-75 50 498)">26°</text>
        <text x="1480" y="486" fontSize="32" fontWeight="normal" transform="rotate(80 1480 486)">22°</text>
      </g>
      <text x="651" y="626" fill="#fff" fontSize="18" fontStyle="italic" fontWeight="bold" textAnchor="middle">R800</text>
      <text x="1503" y="260" fill="#fff" fontSize="22" fontStyle="italic" fontWeight="bold" textAnchor="middle">A</text>
      <path stroke="#e800e8" strokeDasharray={CENTER} d="M183 452H370M295 338V545M1008 452H1252M1140 345V545" />
    </g>
  );
}

// the left half of a drawing, then the same half turned over
function Mirrored({ transform, children }: { transform: string; children: ReactNode }) {
  return (
    <>
      <g>{children}</g>
      <g transform={transform}>{children}</g>
    </>
  );
}

const tyre = (y: number) => (
  <>
    <path d={`M121 ${y}V${y + 63}H191V${y}`} strokeWidth="2" />
    <path d={`M133 ${y}v63M142 ${y}v63M151 ${y}v63M163 ${y}v63M172 ${y}v63M181 ${y}v63`} strokeWidth="3" />
    <path stroke="#00dc00" strokeWidth="10" strokeDasharray="3 3" d={`M126 ${y - 42}v105M186 ${y}v63`} />
    <path stroke="#00dc00" strokeWidth="1.500" d={`M134 ${y + 8}h52M130 ${y + 16}h44M138 ${y + 24}h50M132 ${y + 32}h44M140 ${y + 40}h46M130 ${y + 48}h56M134 ${y + 56}h50`} />
  </>
);

function FrontView() {
  return (
    <g transform="translate(1100 330) scale(.33333)">
      <g stroke="#f4f4f4">
        <Mirrored transform="translate(843 0) scale(-1 1)">
          <path d="M150 225Q180 210 183 190Q186 155 203 130Q235 85 260 66Q340 54 421 54M188 190Q193 155 212 130Q240 88 268 70Q340 61 421 61M182 187H421M182 195H421M188 195Q183 220 165 226" />
          <path d="M97 198Q100 175 120 172H155Q167 175 166 190L163 205Q160 214 145 214L115 212Q100 208 97 198ZM98 203H130V193H100" />
          <path d="M150 228Q130 245 128 280Q122 295 121 320V400Q122 440 135 457H421M135 240Q150 230 180 231Q210 230 216 240Q232 265 235 288Q180 285 150 280Q133 275 130 270Q134 255 135 240" />
          <path d="M165 220Q180 228 215 231Q240 231 255 228Q300 225 340 221Q380 219 421 219" />
          <path d="M240 263Q270 310 320 318Q370 322 400 335Q410 342 421 342M240 265H390M265 266L285 282Q300 283 395 283M288 292Q300 305 330 312Q380 312 405 322Q415 325 421 325M288 292H390Q410 296 421 300" />
          <path d="M216 240Q235 265 240 300Q248 345 265 375Q280 430 300 440Q310 450 330 450H421" />
          <path d="M270 388H352M274 395H352M280 405H352M284 415H421M290 425H421M297 434H421M270 388Q275 410 300 437Q310 443 320 443H421" strokeWidth="2.500" />
          <path d="M147 388Q185 392 215 420L219 430H155Q147 425 147 388Z" />
          {tyre(457)}
        </Mirrored>
        <ellipse cx="421" cy="266" rx="31" ry="19" />
        <ellipse cx="421" cy="266" rx="24" ry="14" />
        <path d="M405 258Q421 250 437 258M421 254V284M412 258Q414 280 421 282Q428 280 430 258" />
        <rect x="353" y="352" width="138" height="62" />
        <text x="421" y="398" fontSize="42" fontWeight="bold" fontStyle="italic" textAnchor="middle" strokeWidth="2.500">VIOS</text>
        <path d="M262 182L350 181L405 192M262 186H380M465 184L550 180L605 193M515 188Q530 160 557 160Q590 162 605 190M524 188Q538 167 557 167Q582 168 596 188M72 520H770" />
      </g>
      <g stroke="#00dc00">
        <path d={glass([[270, 108], [321, 84], [358, 102], [322, 122], [224, 153], [254, 169], [312, 165], [366, 157], [410, 112], [447, 88], [464, 116], [434, 151], [466, 159], [513, 94], [527, 137], [564, 129], [570, 91], [602, 139], [632, 171], [561, 172]])} />
        <path strokeWidth="5" d={lampDots([[150, 238], [168, 242], [185, 238], [140, 255], [164, 258], [186, 254], [205, 250], [148, 270], [170, 272], [194, 268], [212, 262], [208, 278], [225, 278], [632, 250], [650, 240], [668, 242], [688, 238], [625, 268], [645, 262], [666, 258], [690, 254], [620, 280], [655, 274], [676, 270], [160, 398], [195, 412], [205, 425], [684, 398], [655, 410], [640, 425]])} />
        <path strokeWidth="9" strokeDasharray="8 3" d="M280 274H392M450 274H562M308 300H385M458 300H535M340 307H400M442 307H500M400 314H442" />
        <path d="M156 410a16 16 0 1 0 32 0a16 16 0 1 0 -32 0M164 410a8 8 0 1 0 16 0a8 8 0 1 0 -16 0M655 410a16 16 0 1 0 32 0a16 16 0 1 0 -32 0M663 410a8 8 0 1 0 16 0a8 8 0 1 0 -16 0" />
        <path strokeWidth="3" d={ground(542, [99, 163, 226, 298, 370, 454, 533, 611, 680, 748])} />
        <path d={`M121 520V625M722 520V625M155 530V590M688 530V590${dim(155, 688, 586)}${dim(121, 722, 622)}`} />
        <path d="M421 54H770M769 54V520M769 54l-3 14h6zM769 520l-3-14h6zM722 520H770M452 457V520M421 520H455M452 457l-3 12h6zM452 520l-3-12h6z" />
      </g>
      <g {...dimText}>
        <text x="421" y="581">1470</text>
        <text x="421" y="617">1700</text>
        <text x="764" y="286" transform="rotate(-90 764 286)">1460</text>
        <text x="446" y="488" transform="rotate(-90 446 488)">150</text>
      </g>
      <path stroke="#e800e8" strokeDasharray={CENTER} d="M421 27V520" />
      <path stroke="#c030c0" d="M155 445V535M688 445V535" />
    </g>
  );
}

function TopView() {
  return (
    <g transform="translate(580 570) scale(.33333)">
      <g stroke="#f4f4f4">
        <Mirrored transform="translate(0 776) scale(1 -1)">
          <path d="M83 388V300Q85 240 95 215Q110 175 125 152Q150 115 210 88H1240Q1330 90 1375 125Q1410 150 1416 200Q1432 260 1432 388" />
          <path d="M103 388Q102 300 112 270Q125 245 145 238M122 388Q120 300 127 240M83 308Q90 260 130 235" />
          <path d="M127 235Q125 160 180 122Q200 118 250 120L175 195Z" />
          <path d="M236 116Q258 92 290 89M248 118Q330 103 410 101H1088Q1180 106 1235 115Q1340 122 1370 155Q1400 200 1402 300V388M1424 388V300Q1422 230 1412 190L1380 172L1268 168" />
          <path d="M222 148L408 143M130 235Q140 225 160 220L375 162M142 240L395 155" />
          <path d="M358 388Q358 250 400 143M368 388Q370 260 410 143M408 142L420 142L628 195Q606 280 606 388M418 140L430 118L632 184H1040L1145 135Q1150 112 1112 97M430 90V118" />
          <path d="M442 112L640 177H1037L1135 124L455 112ZM495 116L1130 122" />
          <path d="M778 118L797 177M795 90L818 184M830 120V177M1037 122V177M1042 122V177" />
          <path d="M628 195L1052 199Q1066 290 1065 388M1052 199Q1055 188 1070 187L1260 160Q1267 162 1267 170Q1280 280 1280 388" />
          <path d="M495 125L497 80Q505 60 520 56Q532 60 528 85Q515 105 520 135" />
        </Mirrored>
        <path d="M391 230L380 348M388 250L382 330M380 436L398 550M384 460L392 530M1086 384l12-6M1186 384l12-6" strokeWidth="4" />
      </g>
      <g stroke="#00dc00">
        <path d={glass([[431, 173], [486, 189], [540, 204], [594, 213], [423, 220], [475, 244], [557, 243], [600, 256], [425, 287], [512, 275], [558, 282], [601, 299], [485, 325], [431, 350], [497, 358], [554, 355], [594, 390], [393, 408], [444, 407], [538, 411], [491, 458], [559, 460], [428, 496], [564, 506], [488, 529], [411, 553], [428, 595], [469, 590], [569, 567]])} />
        <path d={glass([[1081, 207], [1134, 203], [1199, 198], [1251, 189], [1091, 241], [1155, 240], [1213, 232], [1248, 255], [1089, 284], [1136, 284], [1188, 279], [1251, 303], [1082, 332], [1138, 332], [1202, 329], [1088, 377], [1135, 377], [1188, 377], [1251, 373], [1088, 438], [1140, 438], [1201, 440], [1261, 441], [1080, 490], [1132, 490], [1200, 493], [1255, 494], [1066, 539], [1099, 541], [1152, 545], [1211, 549], [1254, 551], [1077, 580], [1120, 586], [1185, 588], [1243, 598]])} />
        <path d={glass([[555, 135], [610, 135], [649, 155], [694, 137], [715, 155], [760, 134], [769, 166], [860, 136], [884, 159], [927, 135], [968, 154], [1013, 136], [1071, 140], [546, 643], [594, 641], [634, 618], [651, 643], [684, 620], [711, 643], [761, 619], [859, 619], [892, 635], [937, 619], [965, 638], [1008, 622], [1070, 638]])} />
        <path strokeWidth="5" d={lampDots([[208, 133], [226, 131], [182, 149], [212, 149], [167, 170], [190, 163], [147, 188], [175, 180], [141, 217], [165, 200], [140, 566], [158, 574], [148, 590], [165, 592], [178, 594], [157, 612], [179, 608], [174, 628], [188, 630], [222, 644]])} />
      </g>
      <g stroke="#1010ff" strokeDasharray="12 3 3 3">
        <rect x="198" y="90" width="194" height="68" rx="10" />
        <rect x="1042" y="90" width="196" height="68" rx="10" />
        <rect x="198" y="619" width="194" height="68" rx="10" />
        <rect x="1042" y="619" width="196" height="68" rx="10" />
      </g>
      <path stroke="#e800e8" strokeDasharray="46 6 8 6" d="M60 388H1460" />
      <circle cx="362" cy="370" r="4" fill="#e000e0" />
      <circle cx="383" cy="575" r="4" fill="#e000e0" />
    </g>
  );
}

function RearView() {
  return (
    <g transform="translate(1100 600) scale(.33333)">
      <g stroke="#f4f4f4">
        <Mirrored transform="translate(848 0) scale(-1 1)">
          <path d="M150 270Q165 245 183 240Q200 210 225 180Q240 155 262 150Q340 142 424 143M190 237Q215 200 232 180Q250 158 270 155Q340 149 424 149M183 242Q300 227 424 226M183 252Q300 244 424 244M183 240V262" />
          <path d="M82 255Q85 235 100 233H145Q152 235 151 250V265Q145 274 130 274H100Q83 270 82 255Z" />
          <path d="M135 300Q140 275 155 268Q175 262 195 266Q235 290 242 350L133 345Q132 320 135 300" />
          <path d="M133 345Q120 390 121 420Q122 470 135 495V515Q138 526 160 526H424M121 404H424M135 478H424M135 484H424M190 500H424M182 518H424" />
          <path d="M242 350Q245 385 275 391H424M240 345Q250 382 278 386H424" strokeWidth="2.500" />
          <path d="M190 500Q182 520 186 526M142 500Q148 487 158 487L188 485Q190 498 178 505Q148 506 142 500" />
          <path d="M277 279H424M277 279V290Q280 296 290 296H424M300 297Q310 345 345 362Q360 369 424 369M312 297Q322 335 352 358M326 297L348 340M352 362H424" />
          {tyre(529)}
        </Mirrored>
        <ellipse cx="424" cy="259" rx="23" ry="15" />
        <path d="M410 254Q424 246 438 254M424 248V274M416 254Q418 272 424 273Q430 272 432 254" />
        <rect x="358" y="296" width="130" height="62" />
        <circle cx="494" cy="289" r="5" />
        <text x="421" y="341" fontSize="42" fontWeight="bold" fontStyle="italic" textAnchor="middle" strokeWidth="2.500">VIOS</text>
        <path d="M545 528H632M560 530Q566 547 590 547Q610 547 614 530M51 592H783M378 79H459" />
      </g>
      <g fill="#fff" fontWeight="bold" textAnchor="middle">
        <text x="420" y="69" fontSize="20" fontStyle="italic">View A</text>
        <text x="591" y="268" fontSize="16">GE</text>
      </g>
      <g stroke="#00dc00">
        <path d={glass([[268, 176], [343, 174], [228, 214], [289, 205], [369, 205], [426, 174], [462, 199], [492, 174], [533, 200], [580, 184], [610, 211]])} />
        <Mirrored transform="translate(848 0) scale(-1 1)">
          <path d="M138 310L200 318Q220 325 222 350M165 313L162 345M195 320V348" />
        </Mirrored>
        <path strokeWidth="5" d={lampDots([[105, 242], [125, 242], [95, 256], [118, 256], [140, 252], [130, 266], [715, 242], [736, 244], [705, 256], [728, 258], [750, 254], [722, 268], [158, 276], [178, 278], [150, 293], [172, 296], [195, 290], [160, 306], [185, 308], [208, 296], [220, 312], [150, 325], [203, 336], [233, 334], [668, 274], [690, 282], [640, 300], [665, 300], [632, 322], [700, 326], [620, 340], [155, 497], [175, 495], [672, 494], [690, 497]])} />
        <path strokeWidth="3" d={ground(611, [96, 160, 224, 294, 367, 452, 530, 609, 677, 745])} />
        <path d={`M156 600V667M693 600V667${dim(156, 693, 663)}`} />
      </g>
      <text x="424" y="659" fill="#00f000" fontSize="26" textAnchor="middle">1460</text>
      <path stroke="#e800e8" strokeDasharray={CENTER} d="M424 108V592" />
      <path stroke="#c030c0" d="M156 520V600M693 520V600" />
    </g>
  );
}

function TitleBlock() {
  return (
    <g>
      <path stroke="#f0f0f0" d="M1332 936H1503M1332 941H1392M1332 945H1392M1332 950H1392M1332 955H1392M1332 959H1392M1332 964H1392M1332 969H1392M1332 973H1503M1332 978H1392M1332 983H1392M1332 936V987M1338 936V987M1348 936V987M1368 936V987M1383 936V987M1392 936V987M1392 946H1503M1446 946V987M1446 959H1503M1446 964H1503M1446 978H1503M1453 964V973M1459 964V973M1466 959V978M1483 959V973" />
      <path d="M1406 954h28v5h-28zM1403 960h34v5h-34z" fill="#ff00ff" />
      <path stroke="#ff00ff" strokeWidth="2" strokeDasharray="3 1 4 2" d="M1333 962H1391M1333 967H1347M1333 972H1347M1455 962H1500M1487 968H1492M1448 976H1482" />
      <text x="1453" y="944" fill="#ff00ff" fontSize="6" fontStyle="italic" fontWeight="bold" textAnchor="middle">ĐỒ ÁN TỐT NGHIỆP</text>
    </g>
  );
}

function Drawing() {
  return (
    <svg viewBox="0 215 1920 779" className="absolute inset-0 h-full w-full" fill="none" strokeWidth="3.600" fontFamily="'Liberation Sans', sans-serif">
      <g strokeWidth="1">
        <rect x="412.500" y="218.500" width="1094" height="773" stroke="#13b4b8" strokeWidth="1.500" />
        <rect x="435.500" y="222.500" width="1067" height="764" stroke="#e6e6e6" strokeWidth="1.300" />
        <TitleBlock />
      </g>
      <SideView />
      <FrontView />
      <TopView />
      <RearView />
    </svg>
  );
}

function ViewCube() {
  return (
    <div className="absolute top-[45px] right-[13px] flex w-[156px] flex-col items-center">
      <svg viewBox="0 0 156 148" className="h-[148px] w-[156px]" fontFamily="'Liberation Sans', sans-serif" fontWeight="bold" textAnchor="middle">
        <circle cx="78" cy="74" r="59" fill="none" stroke="#42494f" strokeWidth="15" />
        <rect x="50" y="46" width="56" height="56" fill="#a9abad" stroke="#8b8f92" />
        <rect x="60" y="56" width="36" height="36" fill="#9aa1a5" />
        <g fill="#b4b5b6" fontSize="23">
          <text x="78" y="21">N</text>
          <text x="78" y="144">S</text>
          <text x="17" y="82">W</text>
          <text x="140" y="82">E</text>
        </g>
        <text x="78" y="79" fill="#474c55" fontSize="14" fontFamily="'Open Sans', sans-serif">TOP</text>
      </svg>
      <button className="mt-[21px] flex h-5 w-[57px] items-center justify-center gap-[6px] rounded-[5px] border border-[#84879a] bg-[#9b9eab] font-['Liberation_Sans',sans-serif] text-[13px] leading-4 text-[#555a68]">
        WCS
        <svg viewBox="0 0 10 6" className="h-[6px] w-[10px]"><path d="M0 0h10l-5 6z" fill="#b4b7c2" stroke="#7c8090" /></svg>
      </button>
    </div>
  );
}

function NavigationBar() {
  const line = "#454b54";
  return (
    <div className="absolute top-[265px] right-[2px] flex h-[259px] w-10 flex-col items-center rounded bg-[#5a6063] shadow-[0_0_0_1px_#1b2027]">
      <svg viewBox="0 0 40 259" className="h-[259px] w-10" fill="none" stroke={line} strokeWidth="1.300">
        <circle cx="33" cy="7" r="4.500" />
        <path d="M31 5l4 4M35 5l-4 4" />
        <path d="M20 22H34V36A14 14 0 1 1 20 22Z" fill="#53595f" />
        <circle cx="20" cy="36" r="8" />
        <path d="M11 44q9-8 18 0" />
        <path d="M17 60h7l-3.500 3zM17 147h7l-3.500 3zM17 194h7l-3.500 3z" fill={line} stroke="none" />
        <path d="M4 68.500H37M4 203.500H37" stroke="#676b6d" />
        <path d="M14 103L6 90Q6 87 9 88L14 93L11 79Q12 76 14 78L18 89V76Q20 73 22 76V89L25 77Q28 75 28 78L27 90L31 83Q34 82 34 85L28 103Z" fill="#53595f" />
        <path d="M6 111L26 131M6 126L24 111M6 109h4v4H6zM21 109h4v4h-4zM6 124h4v4H6zM29 133l5 4" strokeWidth="2" />
        <circle cx="25" cy="128" r="6" fill="#5a6063" />
        <ellipse cx="20" cy="172" rx="14" ry="5" />
        <path d="M17 183V162H14L20 156L26 162H23V183ZM18 176H9M12 173l-4 3l4 3z" fill="#53595f" />
        <path d="M6 208h7v8H6zM16 208h7v8h-7zM26 208h7v8h-7zM6 219h19v17H6z" />
        <path d="M12 223v9l8-4.500z" fill={line} />
        <circle cx="33" cy="252" r="4.500" />
        <path d="M31 251h4M31 253h4" />
      </svg>
    </div>
  );
}

const history = [
  { text: "Command:", style: "bg-[#4b4d50] text-[#b9babb]" },
  { text: "Specify corner of window, enter a scale factor (nX or nXP), or", style: "bg-[#5a5a5a] text-[#d8d8d8]" },
  { text: "[All/Center/Dynamic/Extents/Previous/Scale/Window/Object] <real time>:", style: "bg-[#666666] text-white" },
];

function CommandLine() {
  const [command, setCommand] = useState("");

  return (
    <div className="absolute inset-x-0 bottom-0 mx-auto w-3/5 font-['DejaVu_Sans_Mono',monospace] text-[15px]">
      <div className="mb-[5px] flex flex-col items-start gap-[6px] pl-[76px]">
        {history.map(line => (
          <p key={line.text} className={`rounded-sm px-px leading-[19px] whitespace-nowrap ${line.style}`}>{line.text}</p>
        ))}
      </div>
      <div className="flex h-8">
        <div className="flex w-[69px] items-center gap-[6px] bg-[#2a303c]/90 pl-1">
          <svg viewBox="0 0 7 20" className="h-5 w-[7px]"><path d="M1 0v20M5 0v20" stroke={W} strokeWidth="2" strokeDasharray="2 2" /></svg>
          <svg viewBox="0 0 12 12" className="size-3"><path d="M1 1l10 10M11 1L1 11" stroke={W} strokeWidth="2.500" /></svg>
          <svg viewBox="0 0 20 20" className="ml-2 size-5"><path d="M3 18l9-10" stroke={W} strokeWidth="3.500" /><path d="M18 4l-4 3l-2-2l3-4q-6-1-6 6q4 5 9 0z" fill={W} /></svg>
        </div>
        <label className="flex flex-1 items-center rounded-r-sm bg-[#f5f5f5]/75 pr-1 pl-[5px]">
          <svg viewBox="0 0 20 15" className="h-[15px] w-5"><path d="M.5 .5h19v14H.5z" fill="#d6d6d6" stroke="#555" /><path d="M0 0h20v4H0z" fill="#555" /><path d="M3 6l4 3l-4 3M9 12h5" fill="none" stroke="#444" /></svg>
          <svg viewBox="0 0 10 6" className="ml-[3px] h-[6px] w-[10px]"><path d="M0 0h10l-5 6z" fill="#444" /></svg>
          <input
            value={command}
            onChange={e => setCommand(e.target.value)}
            aria-label="Command"
            placeholder="Type a command"
            className="ml-[7px] flex-1 text-[#333] italic outline-none placeholder:text-[#5c5e60]"
          />
          <svg viewBox="0 0 10 6" className="h-[5px] w-[10px]"><path d="M0 6h10l-5-6z" fill="#444" /></svg>
        </label>
      </div>
    </div>
  );
}

function Canvas() {
  return (
    <main className="relative flex-1 bg-[#212830]">
      <Drawing />
      <div className="absolute top-1 left-[3px] text-sm leading-[22px] text-[#dfe1e3]">[−][Top][2D Wireframe]</div>
      <div className="absolute top-[10px] right-[11px] flex gap-[11px]">
        <svg viewBox="0 0 14 14" className="size-[14px]"><path d="M0 9h13v4H0z" fill="#e8e8e8" /></svg>
        <svg viewBox="0 0 14 14" className="size-[14px]"><path d="M2 4h8v8H2z" fill="none" stroke="#e8e8e8" strokeWidth="3" /><path d="M4 1h9v9" fill="none" stroke="#e8e8e8" strokeWidth="1.500" /></svg>
        <svg viewBox="0 0 14 14" className="size-[14px]"><path d="M2 2l9 10M11 2L2 12" stroke="#e8e8e8" strokeWidth="3" /></svg>
      </div>
      <ViewCube />
      <NavigationBar />
      <CommandLine />
    </main>
  );
}

interface StatusItem {
  name: string;
  width: string;
  on?: boolean;
  caret?: boolean;
  drawing: ReactNode;
}

const statusItems: StatusItem[][] = [
  [
    { name: "Grid", width: "w-[30px]", drawing: <path d="M4 0v20M10 0v20M16 0v20M0 4h20M0 10h20M0 16h20" stroke={W} /> },
    { name: "Snap", width: "w-[51px]", caret: true, drawing: <path d="M3 3h15M3 8h15M3 13h15M3 18h15" stroke={W} strokeWidth="2" strokeDasharray="2 4" /> },
  ],
  [
    { name: "Infer constraints", width: "w-[30px]", drawing: <><path d="M10 1h9v7h-9zM10 8v6" fill="none" stroke={W} strokeWidth="1.300" /><path d="M1 13h8v7H1z" fill={W} /></> },
    { name: "Dynamic input", width: "w-[28px]", on: true, drawing: <><path d="M4 1v11M0 6h9" stroke="#fff" strokeWidth="1.300" /><path d="M7 12h14v6H7z" fill="#fff" /><path d="M9 14v2" stroke="#5f8fc3" /></> },
    { name: "Ortho mode", width: "w-[31px]", drawing: <path d="M1 0v19h19M1 13h6v6" fill="none" stroke={W} strokeWidth="1.300" /> },
    { name: "Polar tracking", width: "w-[50px]", caret: true, drawing: <path d="M16 5A8 8 0 1 0 18 10M10 10H20M10 10L17 2M15 7l2 3" fill="none" stroke={W} strokeWidth="1.300" /> },
    { name: "Isometric drafting", width: "w-[51px]", caret: true, drawing: <><path d="M2 2l14 15" stroke="#d9575b" strokeWidth="1.500" /><path d="M10 0v19" stroke={G} strokeWidth="1.500" /><path d="M8.500 8h3v3h-3z" fill="none" stroke={W} /></> },
  ],
  [
    { name: "Object snap tracking", width: "w-[31px]", drawing: <><path d="M15 2L1 18h19" fill="none" stroke={W} strokeWidth="1.300" /><path d="M6 9h4v4H6z" fill={W} /></> },
    { name: "Object snap", width: "w-[29px]", on: true, drawing: <path d="M3 4v15h16V3H5M0 0h5v5H0z" fill="none" stroke="#fff" strokeWidth="1.300" /> },
    { name: "Object snap settings", width: "w-[20px]", caret: true, drawing: null },
  ],
  [
    { name: "Lineweight", width: "w-[29px]", drawing: <path d="M0 2h20v1H0zM0 6h12v2H0zM12 7h8v1h-8zM0 11h20v2H0zM0 16h12v3H0zM12 17h8v1h-8z" fill={W} /> },
    { name: "Transparency", width: "w-[29px]", on: true, drawing: <><path d="M.5 .5h19v19H.5z" fill="none" stroke="#fff" /><path d="M2 4h16M2 12h16" stroke="#fff" strokeWidth="4" strokeDasharray="4 4" /><path d="M6 8h14M6 16h14" stroke="#fff" strokeWidth="4" strokeDasharray="4 4" /></> },
    { name: "Selection cycling", width: "w-[31px]", drawing: <><path d="M3 0v6M0 3h6" stroke={W} /><path d="M5 17V6h12" fill="none" stroke={W} /><path d="M7 8h13v12H7z" fill={G} /></> },
    { name: "3D object snap", width: "w-[53px]", caret: true, drawing: <><path d="M3 6h11v11H7M3 6v7M3 6l5-5h12l-6 5M20 1v10l-6 6" fill="none" stroke={W} strokeWidth="1.300" /><path d="M1 14h5v5H1z" fill="#3b4453" stroke="#f0a070" strokeWidth="1.500" /></> },
  ],
  [
    { name: "Dynamic UCS", width: "w-[31px]", drawing: <><path d="M3 3v14h14M0 5l3-4l3 4M16 14l4 3l-4 3" fill="none" stroke={W} strokeWidth="1.300" /><path d="M13 3l-5 7h4l-2 5l6-7h-4z" fill={W} /></> },
    { name: "Selection filtering", width: "w-[28px]", on: true, drawing: <path d="M10 2v6l-7 6M10 8l7 6M10 1L2 6v9l8 5l8-5V6zM8 0h4v4H8zM1 13h4v4H1zM15 13h4v4h-4z" fill="none" stroke="#fff" strokeWidth="1.300" /> },
    { name: "Gizmo", width: "w-[21px]", caret: true, drawing: null },
  ],
  [
    { name: "Annotation visibility", width: "w-[29px]", on: true, drawing: <><path d="M8 0l6 15l3 4l-6-1l-3-5l-3 5l-6 2l4-6z" fill="#fff" /><circle cx="17" cy="4" r="3" fill="none" stroke="#fff" /></> },
  ],
  [
    { name: "Workspace", width: "w-[34px]", drawing: <><circle cx="10" cy="8" r="9" fill="#2c6cb4" /><path d="M2 5q8-5 16 3M9 0q-5 8 2 17" fill="none" stroke="#9cc4ec" /><path d="M-1 11h9v8h-9z" fill="#f0b030" /><path d="M8 15l4 4l8-9" fill="none" stroke="#4caf50" strokeWidth="3" /></> },
    { name: "Isolate objects", width: "w-[34px]", drawing: <><path d="M0 0h19v18H0z" fill={W} /><path d="M1 14l5-9l6 9l4-9" fill="none" stroke="#444" /><path d="M14 11l5 9H9z" fill="#f29a68" /></> },
  ],
  [
    { name: "Customization", width: "w-[30px]", drawing: <path d="M0 2h20M0 10h20M0 18h20" stroke={W} strokeWidth="2" /> },
  ],
];

function Footer() {
  return (
    <footer className="flex h-8 items-start justify-between border-t border-[#3b4453] bg-[#222933]">
      <div className="flex items-start pl-[14px]">
        <button className="rounded-b-lg bg-[#3b4453] px-[14px] leading-6 font-bold text-white">Model</button>
        <button className="ml-1 rounded-b-lg bg-[#2f3745] px-[13px] leading-6 text-[#b4b8bf]">ISO A0 Title Block</button>
        <button className="ml-3 flex h-6 w-[26px] items-center justify-center rounded-b-lg bg-[#2f3745]" aria-label="New layout">
          <svg viewBox="0 0 10 10" className="size-[10px]"><path d="M5 0v10M0 5h10" stroke="#a9adb5" strokeWidth="2" /></svg>
        </button>
      </div>
      <div className="flex gap-[3px] pt-[2px] pr-px">
        <button className="h-[27px] w-[59px] bg-[#3b4453] pt-px text-[#eceef0]">MODEL</button>
        {statusItems.map(group => (
          <div key={group[0].name} className="flex">
            {group.map(item => (
              <button
                key={item.name}
                aria-label={item.name}
                className={`flex h-[27px] items-center justify-center gap-2 ${item.width} ${item.on ? "bg-[#5f8fc3]" : "bg-[#3b4453]"}`}
              >
                {item.drawing && <svg viewBox="0 0 20 20" className="size-5 shrink-0 overflow-visible">{item.drawing}</svg>}
                {item.caret && <Caret big />}
              </button>
            ))}
          </div>
        ))}
      </div>
    </footer>
  );
}

export default function App() {
  return (
    <div className="flex min-h-screen flex-col bg-[#222933] font-['Open_Sans','Noto_Sans',sans-serif] text-sm text-[#e4e6e8]">
      <Header />
      <Ribbon />
      <DocumentTabs />
      <Canvas />
      <Footer />
    </div>
  );
}
